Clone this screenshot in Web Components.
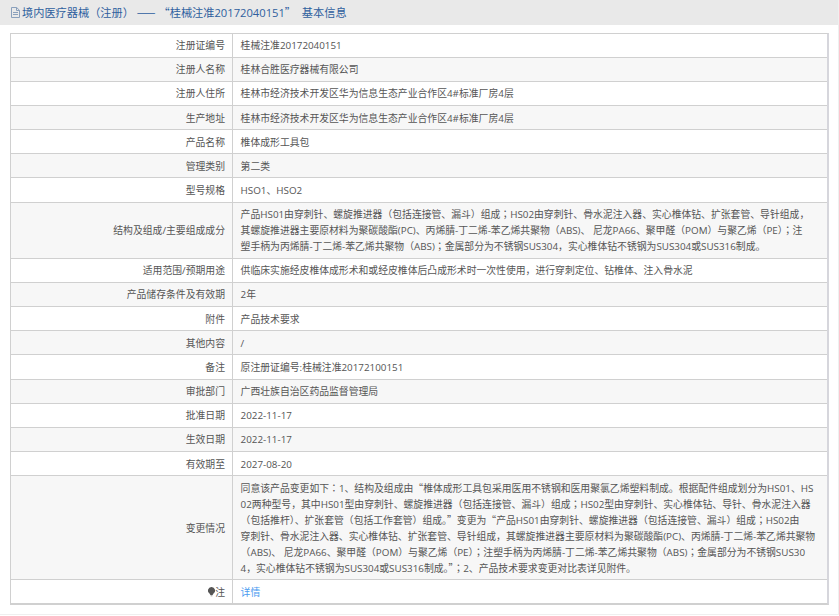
<!DOCTYPE html>
<html>
<head>
<meta charset="utf-8">
<title>基本信息</title>
<style>
    html, body{ margin: 0; padding: 0; background: #fff; }
    body{
        font-family: "Open Sans", "Noto Sans CJK SC", sans-serif;
        overflow: hidden;
    }
</style>
</head>
<body>
<detail-page>
    <title-bar slot="head">境内医疗器械（注册） —— “桂械注准20172040151”  基本信息</title-bar>

    <info-row label="注册证编号">桂械注准20172040151</info-row>
    <info-row label="注册人名称" alt>桂林合胜医疗器械有限公司</info-row>
    <info-row label="注册人住所">桂林市经济技术开发区华为信息生态产业合作区4#标准厂房4层</info-row>
    <info-row label="生产地址" alt>桂林市经济技术开发区华为信息生态产业合作区4#标准厂房4层</info-row>
    <info-row label="产品名称">椎体成形工具包</info-row>
    <info-row label="管理类别" alt>第二类</info-row>
    <info-row label="型号规格">HSO1、HSO2</info-row>
    <info-row label="结构及组成/主要组成成分" alt>产品HS01由穿刺针、螺旋推进器（包括连接管、漏斗）组成；HS02由穿刺针、骨水泥注入器、实心椎体钻、扩张套管、导针组成，<br>其螺旋推进器主要原材料为聚碳酸酯(PC)、丙烯腈-丁二烯-苯乙烯共聚物（ABS)、 尼龙PA66、聚甲醛（POM）与聚乙烯（PE）；注<br>塑手柄为丙烯腈-丁二烯-苯乙烯共聚物（ABS)；金属部分为不锈钢SUS304，实心椎体钻不锈钢为SUS304或SUS316制成。</info-row>
    <info-row label="适用范围/预期用途">供临床实施经皮椎体成形术和或经皮椎体后凸成形术时一次性使用，进行穿刺定位、钻椎体、注入骨水泥</info-row>
    <info-row label="产品储存条件及有效期" alt>2年</info-row>
    <info-row label="附件">产品技术要求</info-row>
    <info-row label="其他内容" alt>/</info-row>
    <info-row label="备注">原注册证编号:桂械注准20172100151</info-row>
    <info-row label="审批部门" alt>广西壮族自治区药品监督管理局</info-row>
    <info-row label="批准日期">2022-11-17</info-row>
    <info-row label="生效日期" alt>2022-11-17</info-row>
    <info-row label="有效期至">2027-08-20</info-row>
    <info-row label="变更情况" alt>同意该产品变更如下：1、结构及组成由“椎体成形工具包采用医用不锈钢和医用聚氯乙烯塑料制成。根据配件组成划分为HS01、HS<br>02两种型号，其中HS01型由穿刺针、螺旋推进器（包括连接管、漏斗）组成；HS02型由穿刺针、实心椎体钻、导针、骨水泥注入器<br>（包括推杆）、扩张套管（包括工作套管）组成。”变更为“产品HS01由穿刺针、螺旋推进器（包括连接管、漏斗）组成；HS02由<br>穿刺针、骨水泥注入器、实心椎体钻、扩张套管、导针组成，其螺旋推进器主要原材料为聚碳酸酯(PC)、丙烯腈-丁二烯-苯乙烯共聚物<br>（ABS)、 尼龙PA66、聚甲醛（POM）与聚乙烯（PE）；注塑手柄为丙烯腈-丁二烯-苯乙烯共聚物（ABS)；金属部分为不锈钢SUS30<br>4，实心椎体钻不锈钢为SUS304或SUS316制成。”；2、产品技术要求变更对比表详见附件。</info-row>
    <info-row label="注" note last><a href="#">详情</a></info-row>
</detail-page>

<script>
// punctuation sits differently per CJK font, so these runs get their own family
const punct = (el) => {
    el.innerHTML = el.innerHTML
        .replace(/[（）；：]/g, '<span class="mid">$&</span>')
        .replace(/[“”—]+/g, '<span class="wide">$&</span>');
};

const punctStyle = `
    ::slotted(.mid){ font-family: "Noto Sans CJK TC", sans-serif; }
    ::slotted(.wide){ font-family: "Noto Sans CJK SC", sans-serif; }
`;

class DetailPage extends HTMLElement {
    constructor(){
        super();

        this.attachShadow({mode:'open'});
        this.shadowRoot.innerHTML = `
            <style>
                :host{
                    display: block;
                    width: 838px;
                    height: 614px;
                    background: #fff;
                    border-right: 1px solid #efefef;
                    border-bottom: 1px solid #efefef;
                }
                #table{
                    margin: 8px 10px 0 10px;
                    width: 816px;
                    border: 1px solid #d0d0d0;
                    border-right: 2px solid #d6d6dc;
                    border-bottom-width: 2px;
                }
            </style>
            <slot name="head"></slot>
            <div id="table"><slot></slot></div>
        `;
    }
}

class TitleBar extends HTMLElement {
    constructor(){
        super();

        this.attachShadow({mode:'open'});
        this.shadowRoot.innerHTML = `
            <style>
                :host{
                    display: flex;
                    align-items: center;
                    gap: 2px;
                    height: 24.5px;
                    padding-left: 11px;
                    background: #e9e9e9;
                    color: #2f5f9e;
                    font-size: 11.2px;
                    white-space: pre;
                }
                svg{ flex: none; }
                ${punctStyle}
            </style>
            <svg width="9" height="11" viewBox="0 0 9 11" fill="none" stroke="#8aa0bc" stroke-width="1">
                <path d="M.5.5h5.2l2.8 2.8v7.2h-8z"/>
                <path d="M5.5.5v3h3M2 5.5h5M2 7.5h5"/>
            </svg>
            <span><slot></slot></span>
        `;
        punct(this);
    }
}

class InfoRow extends HTMLElement {
    constructor(){
        super();

        this.attachShadow({mode:'open'});
        this.shadowRoot.innerHTML = this.RowTemplate();
        punct(this);
    }

    static get observedAttributes(){
        return['label'];
    }

    RowTemplate(){
        const label = this.getAttribute('label') || '';
        const bulb = this.hasAttribute('note') ? `
            <svg width="7" height="10" viewBox="0 0 7 10">
                <path d="M3.5 0a3.5 3.5 0 0 1 2 6.4L4.6 8H2.4l-.9-1.6A3.5 3.5 0 0 1 3.5 0z" fill="#555"/>
                <path d="M2.6 8.8h1.8" stroke="#999" stroke-width="1"/>
            </svg>` : '';

        return `
            <style>
                :host{
                    display: grid;
                    grid-template-columns: 222px 1fr;
                    font-size: 9.84px;
                    line-height: 16px;
                    color: #555;
                    background: ${this.hasAttribute('alt') ? '#f7f7f7' : '#fff'};
                    border-bottom: ${this.hasAttribute('last') ? '0' : '1px solid #d0d0d0'};
                }
                #label{
                    display: flex;
                    align-items: center;
                    justify-content: flex-end;
                    padding: 3.58px 7px 3.58px 0;
                    border-right: 1px solid #d0d0d0;
                }
                #value{
                    padding: 3.58px 0 3.58px 7.6px;
                    white-space: nowrap;
                }
                ::slotted(a){
                    color: #4a9bf0;
                    text-decoration: none;
                }
                ${punctStyle}
            </style>
            <div id="label">${bulb}<span>${label}</span></div>
            <div id="value"><slot></slot></div>
        `;
    }

    attributeChangedCallback(name, oldVal, newVal){
        this.shadowRoot.innerHTML = this.RowTemplate();
    }
}

customElements.define('detail-page', DetailPage);
customElements.define('title-bar', TitleBar);
customElements.define('info-row', InfoRow);
</script>
</body>
</html>
